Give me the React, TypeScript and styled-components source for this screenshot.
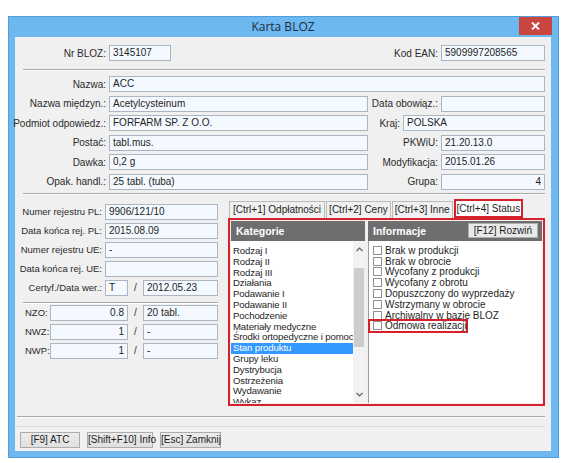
import styled, { createGlobalStyle, css } from 'styled-components'

const GlobalStyle = createGlobalStyle`
  html, body { margin: 0; padding: 0; background: #ffffff; }
  body {
    font-family: "Liberation Sans", Arial, sans-serif;
    font-size: 10px;
    color: #1e1e1e;
  }
  * { box-sizing: border-box; }
`

const Window = styled.div`
  margin: 16px 0 0 8px;
  width: 551px;
  height: 442px;
  background: #6db8ef;
  border: 1px solid #509fdb;
  padding: 0 7px 6px 6px;
  display: flex;
  flex-direction: column;
`

const TitleBar = styled.div`
  height: 20px;
  display: grid;
  grid-template-columns: 1fr auto 1fr;
  align-items: start;
`

const Title = styled.div`
  grid-column: 2;
  font-family: "Open Sans", sans-serif;
  font-size: 12px;
  line-height: 20px;
  color: #1c2d3d;
`

const CloseButton = styled.div`
  justify-self: end;
  width: 33px;
  height: 18px;
  margin-right: -1px;
  background: #c8463f;
  display: flex;
  align-items: center;
  justify-content: center;
`

const Client = styled.div`
  flex: 1;
  background: #f0f0f0;
  display: flex;
  flex-direction: column;
  padding: 8px 6px 0 0;
`

const Row = styled.div<{ $mt?: number }>`
  display: flex;
  align-items: center;
  height: 16px;
  margin-top: ${p => p.$mt ?? 0}px;
`

const Label = styled.div<{ $w?: number; $left?: boolean; $small?: boolean }>`
  flex: ${p => (p.$w ? `0 0 ${p.$w}px` : '1 1 0')};
  min-width: 0;
  display: flex;
  justify-content: ${p => (p.$left ? 'flex-start' : 'flex-end')};
  padding: ${p => (p.$left ? '0 0 0 10px' : '0 3px 0 0')};
  white-space: nowrap;
  color: #2a2a2a;
  font-size: ${p => (p.$small ? 9.5 : 10)}px;
`

const Field = styled.div<{ $w?: number; $right?: boolean }>`
  flex: ${p => (p.$w ? `0 0 ${p.$w}px` : '1 1 0')};
  height: 16px;
  border: 1px solid #abb6c0;
  background: #f3f9fe;
  padding: 0 3px;
  line-height: 14px;
  white-space: nowrap;
  overflow: hidden;
  text-align: ${p => (p.$right ? 'right' : 'left')};
`

const Slash = styled.div`
  flex: 0 0 15px;
  text-align: center;
  color: #333;
`

const Separator = styled.div<{ $mt: number; $mb?: number; $ml?: number }>`
  border-top: 1px solid #a8a8a8;
  border-bottom: 1px solid #ffffff;
  margin: ${p => `${p.$mt}px 0 ${p.$mb ?? 0}px ${p.$ml ?? 8}px`};
`

const TopRows = styled.div`
  display: flex;
  flex-direction: column;
  gap: 3.6px;
`

const Lower = styled.div`
  display: grid;
  grid-template-columns: 203px 1fr;
  column-gap: 10px;
`

const LeftCol = styled.div`
  padding-top: 9px;
  display: flex;
  flex-direction: column;
`

const RightCol = styled.div`
  padding-top: 5px;
  display: flex;
  flex-direction: column;
`

const Tabs = styled.div`
  display: flex;
  align-items: flex-end;
  height: 18px;
  padding-left: 1px;
  gap: 1px;
`

const Tab = styled.div<{ $active?: boolean; $pad?: number }>`
  height: 17px;
  padding: 0 ${p => p.$pad ?? 3}px;
  border: 1px solid #bababa;
  border-bottom: none;
  background: #f0f0f0;
  line-height: 16px;
  white-space: nowrap;
  ${p =>
    p.$active &&
    css`
      height: 19px;
      padding: 0 1px;
      border: 2px solid #d6202b;
      background: #ffffff;
      line-height: 15px;
    `}
`

const Panel = styled.div`
  height: 188px;
  border: 2px solid #d6202b;
  padding: 1px;
  background: #f0f0f0;
  display: grid;
  grid-template-columns: 134px 1fr;
  column-gap: 3px;
`

const Column = styled.div`
  display: flex;
  flex-direction: column;
  min-height: 0;
`

const Header = styled.div`
  height: 20px;
  flex: 0 0 20px;
  background: #6e6e6e;
  color: #ffffff;
  font-weight: bold;
  font-size: 10.5px;
  display: flex;
  align-items: center;
  justify-content: space-between;
  padding: 0 4px 0 5px;
`

const SmallButton = styled.div`
  height: 15px;
  padding: 0 5px;
  border: 1px solid #adadad;
  background: #e9e9e9;
  color: #1e1e1e;
  font-weight: normal;
  font-size: 10px;
  line-height: 13px;
`

const ListBox = styled.div`
  flex: 1;
  min-height: 0;
  background: #ffffff;
  display: flex;
`

const Items = styled.div`
  flex: 1;
  overflow: hidden;
  padding-top: 5px;
  font-size: 9.6px;
  letter-spacing: -0.12px;
`

const Item = styled.div<{ $selected?: boolean }>`
  height: 10.8px;
  line-height: 10.8px;
  padding-left: 2px;
  white-space: nowrap;
  ${p =>
    p.$selected &&
    css`
      background: #3399ff;
      color: #ffffff;
    `}
`

const ScrollBar = styled.div`
  flex: 0 0 12px;
  background: #f2f2f2;
  display: flex;
  flex-direction: column;
`

const Arrow = styled.div`
  height: 17px;
  display: flex;
  align-items: center;
  justify-content: center;
`

const Track = styled.div`
  flex: 1;
  padding: 10px 1px 0;
`

const Thumb = styled.div`
  height: 79px;
  background: #cdcdcd;
`

const CheckList = styled.div`
  flex: 1;
  background: #ffffff;
  border-left: 1px solid #9c9c9c;
  padding-top: 4px;
`

const CheckItem = styled.div<{ $boxed?: boolean }>`
  height: 10.8px;
  display: flex;
  align-items: center;
  gap: 3px;
  padding-left: 4px;
  white-space: nowrap;
  ${p =>
    p.$boxed &&
    css`
      position: relative;
      width: 96px;
      margin-left: 1px;
      padding-left: 3px;
      box-shadow: 0 0 0 2px #d6202b;
    `}
`

const Box = styled.span`
  flex: 0 0 9px;
  width: 9px;
  height: 9px;
  border: 1px solid #8f8f8f;
  background: #ffffff;
`

const ButtonBar = styled.div`
  margin-top: 8px;
  border-top: 1px solid #d9d9d9;
  padding: 5px 0 0 5px;
  display: flex;
  gap: 7px;
`

const Button = styled.div<{ $w: number }>`
  width: ${p => p.$w}px;
  height: 16px;
  border: 1px solid #acacac;
  background: linear-gradient(#ececec, #e0e0e0);
  line-height: 14px;
  text-align: center;
  white-space: nowrap;
`

const Chevron = ({ down }: { down?: boolean }) => (
  <svg width="7" height="5" viewBox="0 0 7 5">
    <polyline
      points={down ? '0.5,1 3.5,4 6.5,1' : '0.5,4 3.5,1 6.5,4'}
      fill="none"
      stroke="#606060"
      strokeWidth="1.2"
    />
  </svg>
)

const categories = [
  'Rodzaj I',
  'Rodzaj II',
  'Rodzaj III',
  'Działania',
  'Podawanie I',
  'Podawanie II',
  'Pochodzenie',
  'Materiały medyczne',
  'Środki ortopedyczne i pomoc',
  'Stan produktu',
  'Grupy leku',
  'Dystrybucja',
  'Ostrzeżenia',
  'Wydawanie',
  'Wykaz',
]

const infos = [
  'Brak w produkcji',
  'Brak w obrocie',
  'Wycofany z produkcji',
  'Wycofany z obrotu',
  'Dopuszczony do wyprzedaży',
  'Wstrzymany w obrocie',
  'Archiwalny w bazie BLOZ',
  'Odmowa realizacji',
]

const App = () => {
  return (
    <>
      <GlobalStyle />
      <Window>
        <TitleBar>
          <Title>Karta BLOZ</Title>
          <CloseButton>
            <svg width="9" height="8" viewBox="0 0 9 8">
              <path d="M1 0.5 L8 7.5 M8 0.5 L1 7.5" stroke="#fff" strokeWidth="1.8" />
            </svg>
          </CloseButton>
        </TitleBar>
        <Client>
          <Row>
            <Label $w={94}>Nr BLOZ:</Label>
            <Field $w={62}>3145107</Field>
            <Label>Kod EAN:</Label>
            <Field $w={104}>5909997208565</Field>
          </Row>
          <Separator $mt={8} $mb={5} />
          <TopRows>
            <Row>
              <Label $w={94}>Nazwa:</Label>
              <Field>ACC</Field>
            </Row>
            <Row>
              <Label $w={94}>Nazwa międzyn.:</Label>
              <Field $w={259}>Acetylcysteinum</Field>
              <Label>Data obowiąz.:</Label>
              <Field $w={104} />
            </Row>
            <Row>
              <Label $w={94}>Podmiot odpowiedz.:</Label>
              <Field $w={259}>FORFARM SP. Z O.O.</Field>
              <Label>Kraj:</Label>
              <Field $w={142}>POLSKA</Field>
            </Row>
            <Row>
              <Label $w={94}>Postać:</Label>
              <Field $w={259}>tabl.mus.</Field>
              <Label>PKWiU:</Label>
              <Field $w={104}>21.20.13.0</Field>
            </Row>
            <Row>
              <Label $w={94}>Dawka:</Label>
              <Field $w={259}>0,2 g</Field>
              <Label>Modyfikacja:</Label>
              <Field $w={104}>2015.01.26</Field>
            </Row>
            <Row>
              <Label $w={94}>Opak. handl.:</Label>
              <Field $w={259}>25 tabl. (tuba)</Field>
              <Label>Grupa:</Label>
              <Field $w={104} $right>
                4
              </Field>
            </Row>
          </TopRows>
          <Separator $mt={3} />
          <Lower>
            <LeftCol>
              <Row>
                <Label $w={90} $small>Numer rejestru PL:</Label>
                <Field $w={113}>9906/121/10</Field>
              </Row>
              <Row $mt={3}>
                <Label $w={90} $small>Data końca rej. PL:</Label>
                <Field $w={113}>2015.08.09</Field>
              </Row>
              <Row $mt={3}>
                <Label $w={90} $small>Numer rejestru UE:</Label>
                <Field $w={113}>-</Field>
              </Row>
              <Row $mt={3}>
                <Label $w={90} $small>Data końca rej. UE:</Label>
                <Field $w={113} />
              </Row>
              <Row $mt={3}>
                <Label $w={90} $small>Certyf./Data wer.:</Label>
                <Field $w={23}>T</Field>
                <Slash>/</Slash>
                <Field $w={75}>2012.05.23</Field>
              </Row>
              <Separator $mt={6} $mb={1} />
              <Row>
                <Label $w={35} $left $small>
                  NZO:
                </Label>
                <Field $w={78} $right>
                  0.8
                </Field>
                <Slash>/</Slash>
                <Field $w={75}>20 tabl.</Field>
              </Row>
              <Row $mt={3}>
                <Label $w={35} $left $small>
                  NWZ:
                </Label>
                <Field $w={78} $right>
                  1
                </Field>
                <Slash>/</Slash>
                <Field $w={75}>-</Field>
              </Row>
              <Row $mt={3}>
                <Label $w={35} $left $small>
                  NWP:
                </Label>
                <Field $w={78} $right>
                  1
                </Field>
                <Slash>/</Slash>
                <Field $w={75}>-</Field>
              </Row>
            </LeftCol>
            <RightCol>
              <Tabs>
                <Tab>[Ctrl+1] Odpłatności</Tab>
                <Tab $pad={2}>[Ctrl+2] Ceny</Tab>
                <Tab $pad={2}>[Ctrl+3] Inne</Tab>
                <Tab $active>[Ctrl+4] Status</Tab>
              </Tabs>
              <Panel>
                <Column>
                  <Header>Kategorie</Header>
                  <ListBox>
                    <Items>
                      {categories.map(c => (
                        <Item key={c} $selected={c === 'Stan produktu'}>
                          {c}
                        </Item>
                      ))}
                    </Items>
                    <ScrollBar>
                      <Arrow>
                        <Chevron />
                      </Arrow>
                      <Track>
                        <Thumb />
                      </Track>
                      <Arrow>
                        <Chevron down />
                      </Arrow>
                    </ScrollBar>
                  </ListBox>
                </Column>
                <Column>
                  <Header>
                    Informacje
                    <SmallButton>[F12] Rozwiń</SmallButton>
                  </Header>
                  <CheckList>
                    {infos.map(i => (
                      <CheckItem key={i} $boxed={i === 'Odmowa realizacji'}>
                        <Box />
                        {i}
                      </CheckItem>
                    ))}
                  </CheckList>
                </Column>
              </Panel>
            </RightCol>
          </Lower>
          <Separator $mt={10} $ml={2} />
          <ButtonBar>
            <Button $w={60}>[F9] ATC</Button>
            <Button $w={66}>[Shift+F10] Info</Button>
            <Button $w={61}>[Esc] Zamknij</Button>
          </ButtonBar>
        </Client>
      </Window>
    </>
  )
}

export default App
